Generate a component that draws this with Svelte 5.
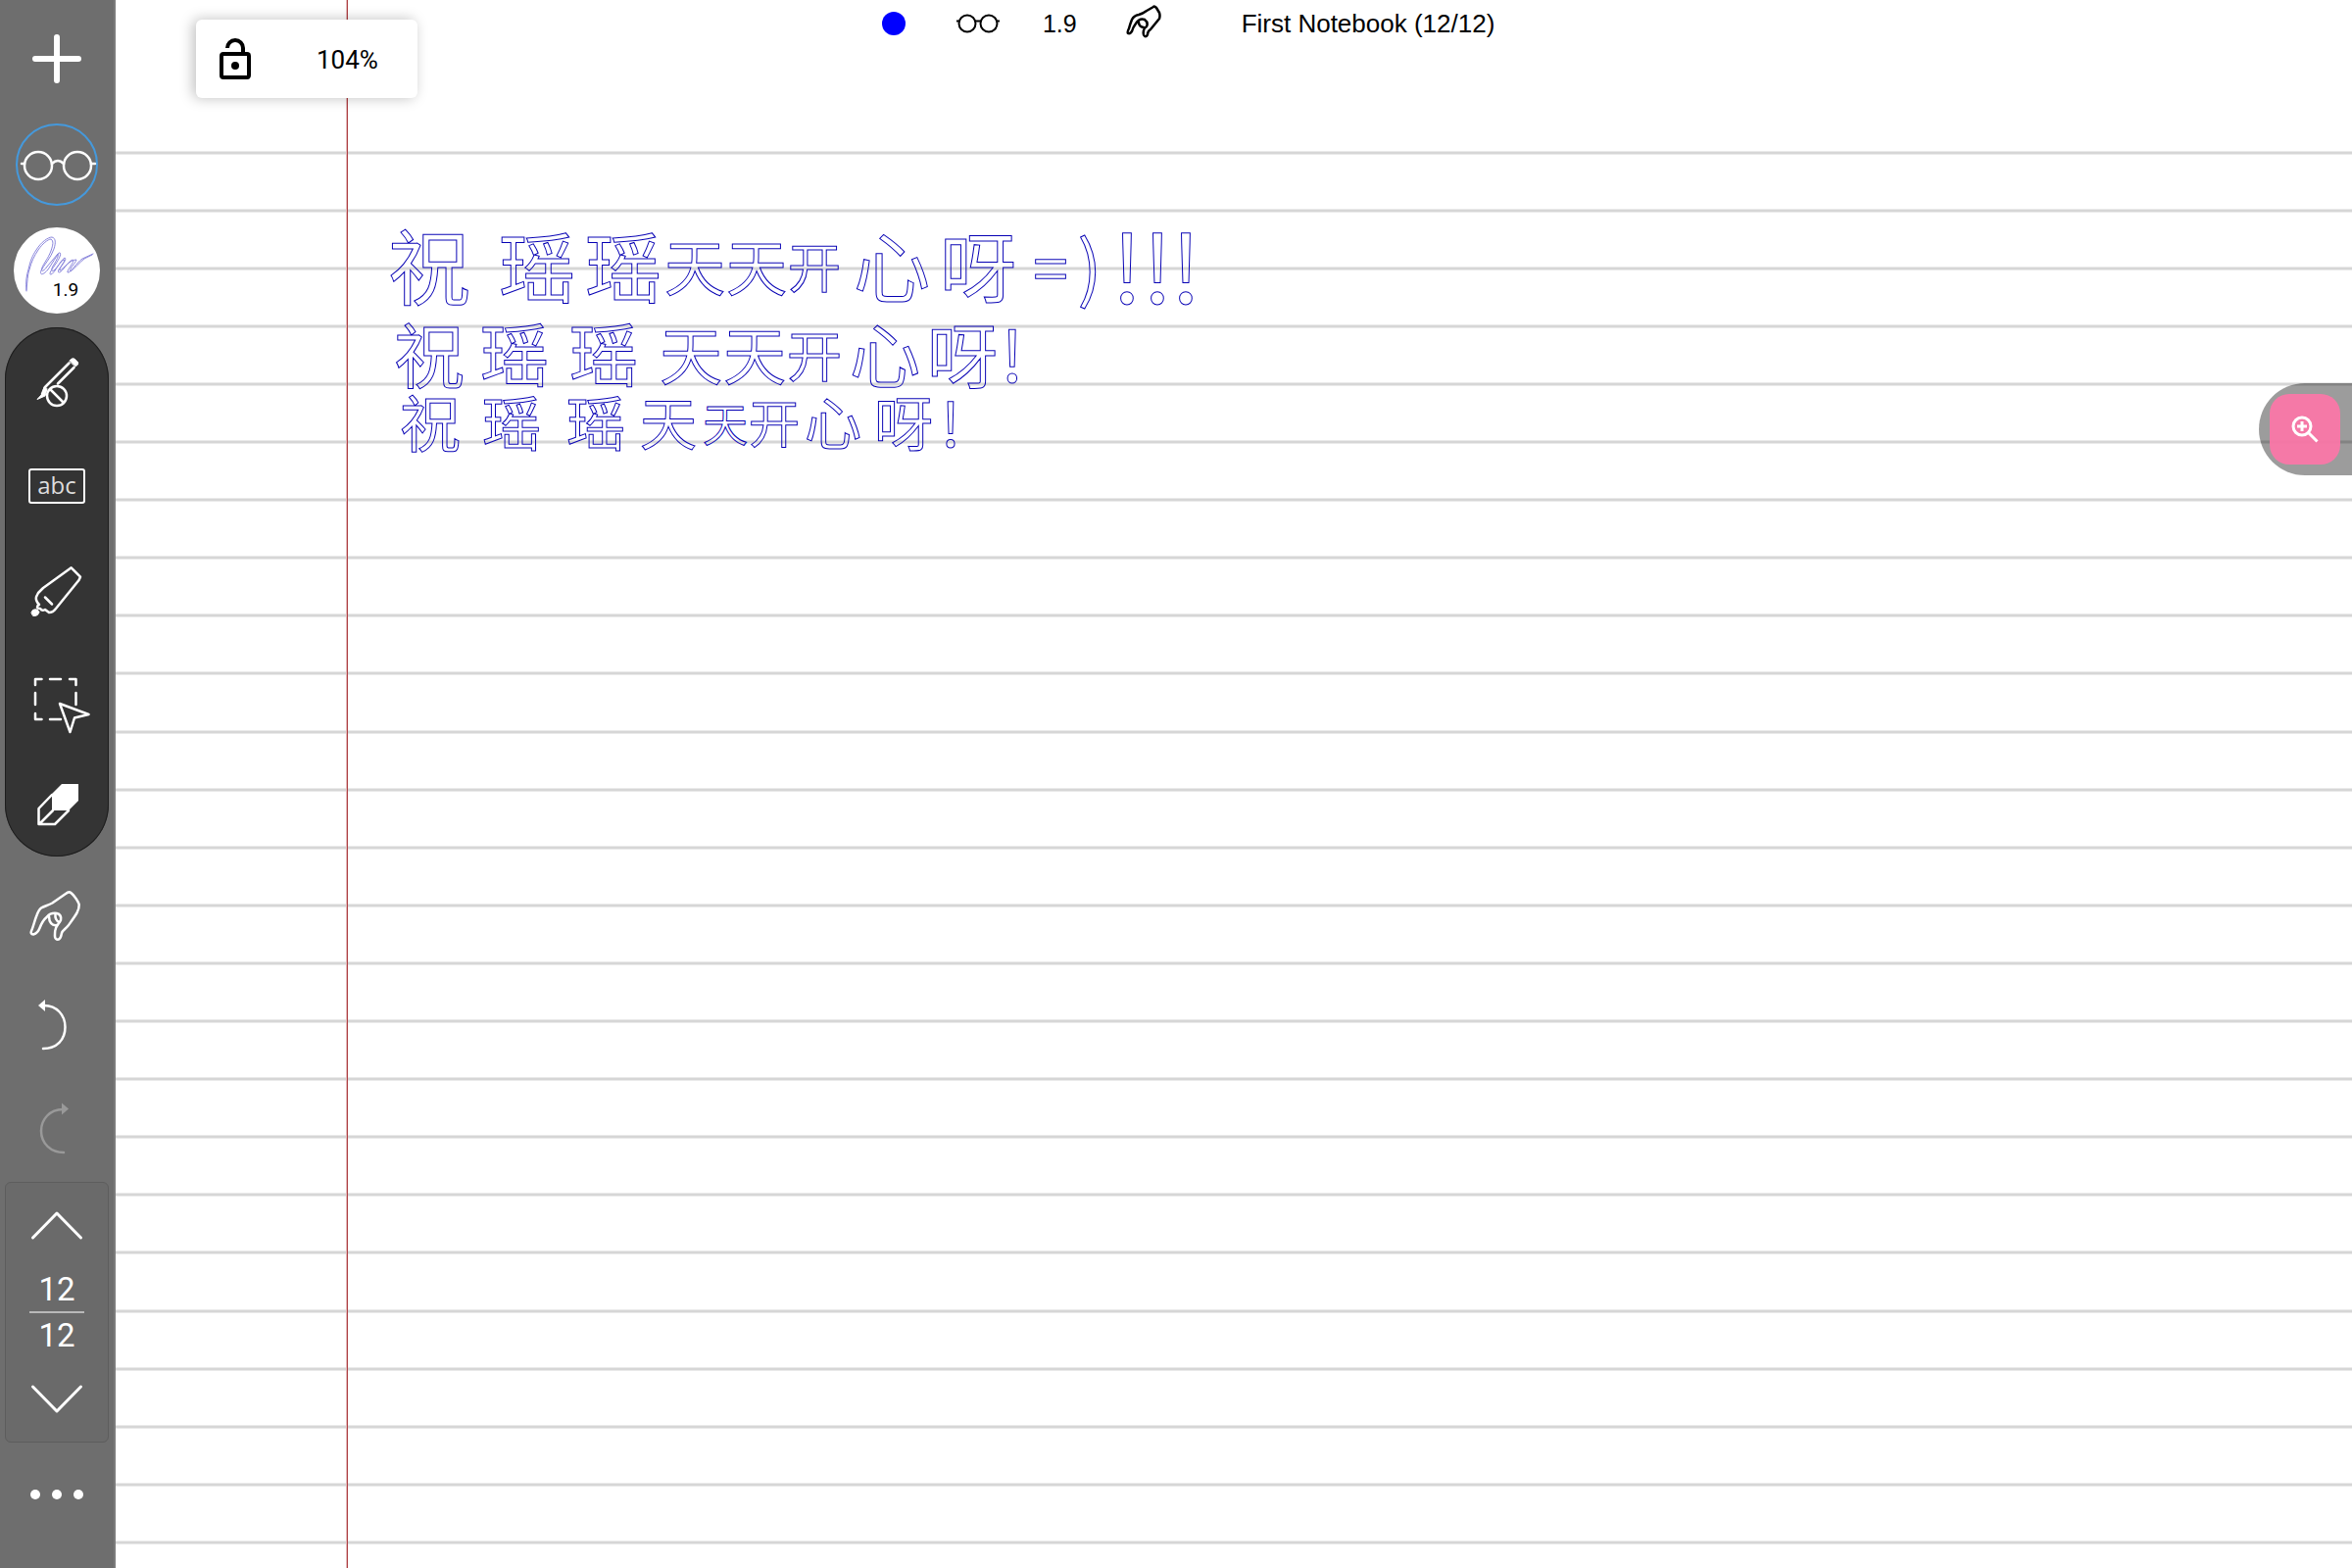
<script>
  let paperHeight = $state(1600);

  const FIRST_RULE = 156;
  const RULE_STEP = 59.1;

  let rules = $derived(
    Array.from(
      { length: Math.max(0, Math.ceil((paperHeight - FIRST_RULE) / RULE_STEP)) },
      (_, i) => Math.floor(FIRST_RULE + i * RULE_STEP)
    )
  );

  // Each written sign: character, horizontal centre, size.
  const ink = [
    {
      middle: 274,
      signs: [
        ['祝', 320, 84], ['瑶', 430, 78], ['瑶', 518, 78], ['天', 591, 62], ['天', 654, 62],
        ['开', 713, 54], ['心', 792, 78], ['呀', 880, 78], ['=', 954, 64], [')', 994, 74],
        ['!', 1032, 96], ['!', 1063, 96], ['!', 1092, 96]
      ]
    },
    {
      middle: 363,
      signs: [
        ['祝', 320, 72], ['瑶', 407, 70], ['瑶', 498, 70], ['天', 587, 64], ['天', 652, 64],
        ['开', 713, 56], ['心', 785, 72], ['呀', 864, 72], ['!', 915, 72]
      ]
    },
    {
      middle: 433,
      signs: [
        ['祝', 321, 62], ['瑶', 404, 60], ['瑶', 490, 60], ['天', 564, 58], ['天', 622, 46],
        ['开', 672, 52], ['心', 732, 58], ['呀', 804, 60], ['!', 852, 62]
      ]
    }
  ];

  const baseline = (middle, size) => Math.round(middle + size * 0.37);
</script>

{#snippet hand()}
  <path d="M70.7 30.3C74 31 80 40 80.7 43C81 49 78 53 70 64C66 69 64 69 63 72C62.5 75 62 78.7 59 78.7C55 78.5 56 74 56.2 70C56.5 65 60 63 62 59C62.6 56 62 53 58 52C54 51.5 50 53 48 55.5C45 58 42 63 40.5 67C39 71 37 72.5 34 73.5C31.500 73.5 31.300 71.500 32 70C34 66 35 60 37.500 54C39 50 40 48 42 46.500C45 44.500 49 44 53.300 41.500L67 32Q69 30.500 70.700 30.300Z" />
  <path d="M50 55C50 61 53 65 58 64M56.500 52.500C56 57 58 60 60.500 61" />
{/snippet}

<div class="app">
  <aside>
    <button class="tool" aria-label="Add">
      <svg viewBox="0 0 116 108"><path class="thick" d="M36 54H80M58 32V76" /></svg>
    </button>
    <button class="tool" aria-label="Reading mode">
      <svg viewBox="0 0 116 108">
        <circle class="ring" cx="58" cy="54" r="41" />
        <circle cx="39" cy="55" r="14" /><circle cx="79" cy="55" r="14" />
        <path d="M53 53Q59 47 65 53M22 53H25M93 53H97" />
      </svg>
    </button>
    <button class="tool" aria-label="Pen, width 1.9">
      <span class="pen">
        <svg viewBox="0 0 88 88">
          <path d="M13 65C12 56 13 49 15 43C17 34 19 29 23 23C28 15 35 10 39 10C43 11 43 16 41 22C38 31 31 38 28 44C26 50 31 48 35 43L46 26C50 25 46 33 43 37C39 43 35 48 38 48C42 47 47 34 52 31C55 32 49 39 46 43C44 48 48 46 51 42C55 37 60 31 61 34C60 38 54 44 55 46C58 47 64 36 70 32L81 27" />
          <path d="M13 64C14 55 14 49 16 43C18 35 21 29 25 23C29 17 35 12 38 12C41 14 40 18 38 24C35 32 31 36 29 41C27 46 31 45 34 40L45 27C46 29 44 33 41 38C38 42 38 46 41 44C46 39 49 33 52 33C52 35 46 42 47 44C51 42 57 33 64 33C63 37 56 42 58 45C62 42 67 36 72 32L80 28" />
        </svg>
        <span class="pen-size">1.9</span>
      </span>
    </button>

    <div class="pill">
      <button class="tool" aria-label="Stylus only">
        <svg viewBox="5 0 106 108">
          <path class="solid" d="M71 34Q74 30 77 33Q81 36 79.500 38L77 40Z" />
          <path d="M70.500 36.500L46 61L43 68M75.500 41L59 57.500" />
          <path class="solid" d="M45 61L43 68L38 73.500L46 70L48 63Z" />
          <circle cx="58" cy="70" r="10" /><path d="M51 63L65 77" />
        </svg>
      </button>
      <button class="tool" aria-label="Text box"><span class="abc">abc</span></button>
      <button class="tool" aria-label="Highlighter">
        <svg viewBox="5 0 106 108">
          <path d="M72.700 29.300L82 38.700L80.500 42L57 71Q54 75 50 75L46 72Q43 74 41 71Q37 71 38.500 68L40 67Q36 63 37 59L39 55L44 50Z" />
          <path d="M46 59.500L53 66.500" />
          <path class="solid" d="M32 75Q33 71 38 72L40 74.500Q39 79 34 78.500Z" />
        </svg>
      </button>
      <button class="tool" aria-label="Select">
        <svg viewBox="5 0 106 108">
          <path d="M36 41V35H42.500M51 35H62M71 35H77.500V41M36 49V61M77.500 49V61M36 70V76H42.500M51 76H62" />
          <path d="M61 60L90.500 71L76 74.500L71.500 89Z" />
        </svg>
      </button>
      <button class="tool" aria-label="Eraser">
        <svg viewBox="5 0 106 108">
          <path class="fill" d="M63 34H80V51L70 61H53V44Z" />
          <path d="M53 45L39.500 59V75H56L70 61M40 75L54 61" />
        </svg>
      </button>
    </div>

    <button class="tool after-pill" aria-label="Touch drawing">
      <svg viewBox="0 0 116 108">{@render hand()}</svg>
    </button>
    <button class="tool" aria-label="Undo">
      <svg viewBox="0 0 116 108">
        <path d="M45 38C58 38 66.500 48 66.500 60C66.500 73 58 82 44 82" />
        <path class="fill" d="M39 38L46 32V44Z" />
      </svg>
    </button>
    <button class="tool" aria-label="Redo" disabled>
      <svg viewBox="0 0 116 108">
        <path d="M64 36C51 36 42 46 42 58C42 71 52 80 65 80" />
        <path class="fill" d="M70 35.500L63 29.500V41.500Z" />
      </svg>
    </button>

    <nav class="pager" aria-label="Pages">
      <button class="step" aria-label="Previous page">
        <svg viewBox="6 0 104 86"><path class="chev" d="M33.500 56L58 31L82.500 56" /></svg>
      </button>
      <span class="num">12</span>
      <span class="bar"></span>
      <span class="num">12</span>
      <button class="step" aria-label="Next page">
        <svg viewBox="6 0 104 86"><path class="chev" d="M33.500 30L58 55L82.500 30" /></svg>
      </button>
    </nav>

    <button class="tool" aria-label="More">
      <svg viewBox="0 0 116 108">
        <g class="fill"><circle cx="36" cy="53" r="5" /><circle cx="58" cy="53" r="5" /><circle cx="80" cy="53" r="5" /></g>
      </svg>
    </button>
  </aside>

  <main bind:clientHeight={paperHeight}>
    <svg class="paper" role="img" aria-label="Handwritten note">
      {#each rules as y}
        <line class="rule" x1="0" x2="100%" y1={y} y2={y} />
      {/each}
      <line class="margin-soft" x1="236" x2="236" y1="0" y2="100%" />
      <line class="margin" x1="236.5" x2="236.5" y1="0" y2="100%" />
      {#each ink as line}
        <text class="ink">{#each line.signs as [sign, x, size]}<tspan {x} y={baseline(line.middle, size)} font-size={size}>{sign}</tspan>{/each}</text>
      {/each}
    </svg>

    <header>
      <span class="color"></span>
      <svg class="mini-glasses" viewBox="0 0 44 22">
        <circle cx="11" cy="11" r="8.5" /><circle cx="33" cy="11" r="8.5" />
        <path d="M19.500 8.500H24.500M0 8.500H2.500M41.500 8.500H44" />
      </svg>
      <span class="width">1.9</span>
      <svg class="mini-hand" viewBox="0 0 36 34">
        <path d="M28 2Q29 1 31 3L34 8Q35 11 34 14L25 25Q22 27 22 30Q21 33 19 32Q17 31 18 26Q18 24 21 22Q23 18 19 15Q14 13 10 19Q7 23 6 27Q4 30 2 29Q1 28 3 24Q4 20 6 15Q8 11 13 10Q17 9 21 6Z" />
        <path d="M13 18Q13 22 18 23" />
      </svg>
      <span class="title">First Notebook (12/12)</span>
    </header>

    <div class="zoom">
      <button class="lock" aria-label="Lock zoom">
        <svg viewBox="0 0 32 42">
          <rect x="2" y="16" width="28" height="24" rx="2" />
          <path d="M8 10A8 8 0 0 1 24 10V16" /><circle class="dot" cx="16" cy="28" r="4" />
        </svg>
      </button>
      <span class="percent">104%</span>
    </div>

    <div class="bubble">
      <button aria-label="Zoom in">
        <svg viewBox="0 0 28 28">
          <circle cx="11" cy="11" r="9" /><path d="M17.500 17.500L26.500 26.500" /><path d="M6 11H16M11 6V16" />
        </svg>
      </button>
    </div>
  </main>
</div>

<style>
  :global(body) {
    margin: 0;
    background: #fff;
  }
  .app {
    display: flex;
    min-height: 100vh;
    background: #fff;
    color: #000;
    font-family: Roboto, sans-serif;
  }
  button {
    display: flex;
    align-items: center;
    justify-content: center;
    padding: 0;
    border: 0;
    background: none;
    color: inherit;
    font: inherit;
    cursor: pointer;
  }
  aside {
    box-sizing: border-box;
    flex: none;
    display: flex;
    flex-direction: column;
    width: 118px;
    padding-top: 6px;
    border-right: 2px solid #7c7c7c;
    background: #6e6e6e;
    color: #fff;
  }
  aside svg,
  .mini-glasses,
  .mini-hand {
    fill: none;
    stroke: currentColor;
    stroke-width: 2.5;
    stroke-linecap: round;
    stroke-linejoin: round;
  }
  .tool {
    flex: none;
    width: 100%;
    height: 108px;
  }
  .tool > svg {
    width: 100%;
    height: 108px;
  }
  .tool:disabled {
    color: #999;
  }
  aside .thick {
    stroke-width: 6;
  }
  .ring {
    stroke: #4599dc;
    stroke-width: 2;
  }
  .solid {
    fill: currentColor;
    stroke-width: 1;
  }
  .fill {
    fill: currentColor;
    stroke: none;
  }
  .pen {
    display: grid;
    width: 88px;
    height: 88px;
    border-radius: 50%;
    background: #fff;
    color: #000;
  }
  .pen svg,
  .pen-size {
    grid-area: 1 / 1;
  }
  .pen svg {
    stroke: #8a86dc;
    stroke-width: 1;
  }
  .pen-size {
    place-self: end center;
    padding: 0 0 13px 18px;
    font-size: 19px;
    line-height: 22px;
  }
  .pill {
    margin: 4px 5px 0;
    border-radius: 53px;
    background: #343434;
    box-shadow: inset 0 0 0 1px #1d1d1d;
  }
  .abc {
    box-sizing: border-box;
    width: 58px;
    height: 36px;
    border: 2px solid #fff;
    border-radius: 3px;
    color: #ddd;
    font: 24px/30px 'Open Sans', sans-serif;
  }
  .after-pill {
    margin-top: 6px;
  }
  .pager {
    box-sizing: border-box;
    display: flex;
    flex-direction: column;
    align-items: center;
    justify-content: space-between;
    height: 266px;
    margin: 2px 5px 0;
    border: 1px solid #5d5d5d;
    border-radius: 6px;
    background: #6a6a6a;
  }
  .step,
  .step svg {
    width: 104px;
    height: 86px;
  }
  aside .chev {
    stroke-width: 3;
  }
  .num {
    font-size: 33px;
    line-height: 44px;
  }
  .bar {
    width: 56px;
    height: 2px;
    background: #b8b8b8;
  }
  main {
    position: relative;
    flex: 1;
    min-width: 0;
    overflow: hidden;
  }
  .paper {
    position: absolute;
    inset: 0;
    width: 100%;
    height: 100%;
  }
  .rule {
    stroke: #d6d6d6;
    stroke-width: 3;
  }
  .margin {
    stroke: #ad3f43;
    stroke-width: 1;
  }
  .margin-soft {
    stroke: #e3b9ba;
    stroke-width: 2;
  }
  .ink {
    fill: none;
    stroke: #0600b4;
    stroke-width: 1;
    text-anchor: middle;
    font-family: 'Noto Sans CJK SC', sans-serif;
  }
  header {
    position: relative;
    display: flex;
    align-items: center;
    height: 48px;
    padding-left: 34%;
    font: 25px/28px 'Liberation Sans', sans-serif;
    white-space: nowrap;
  }
  .color {
    width: 24px;
    height: 24px;
    margin-left: 6px;
    border-radius: 50%;
    background: #00f;
  }
  .mini-glasses {
    width: 44px;
    height: 22px;
    margin: 0 44px 0 52px;
    stroke-width: 2;
  }
  .mini-hand {
    width: 36px;
    height: 34px;
    margin: 0 82px 0 50px;
    padding-bottom: 4px;
  }
  .title {
    font-size: 26px;
  }
  .zoom {
    position: absolute;
    top: 20px;
    left: 82px;
    display: flex;
    align-items: center;
    gap: 67px;
    box-sizing: border-box;
    width: 226px;
    height: 80px;
    padding-left: 24px;
    border-radius: 6px;
    background: #fff;
    box-shadow: -3px 0 14px rgba(0, 0, 0, 0.25);
  }
  .lock svg {
    width: 32px;
    height: 42px;
    fill: none;
    stroke: #000;
    stroke-width: 4;
  }
  .lock .dot {
    fill: #000;
    stroke: none;
  }
  .percent {
    padding-top: 2px;
    font-size: 26px;
    line-height: 32px;
  }
  .bubble {
    position: absolute;
    top: 391px;
    right: 0;
    box-sizing: border-box;
    padding: 11px 12px 11px 11px;
    border-radius: 47px 0 0 47px;
    background: rgba(0, 0, 0, 0.39);
  }
  .bubble button {
    width: 72px;
    height: 72px;
    border-radius: 20px;
    background: rgba(255, 118, 168, 0.9);
  }
  .bubble svg {
    width: 28px;
    height: 28px;
    fill: none;
    stroke: #fff;
    stroke-width: 3;
  }
</style>
